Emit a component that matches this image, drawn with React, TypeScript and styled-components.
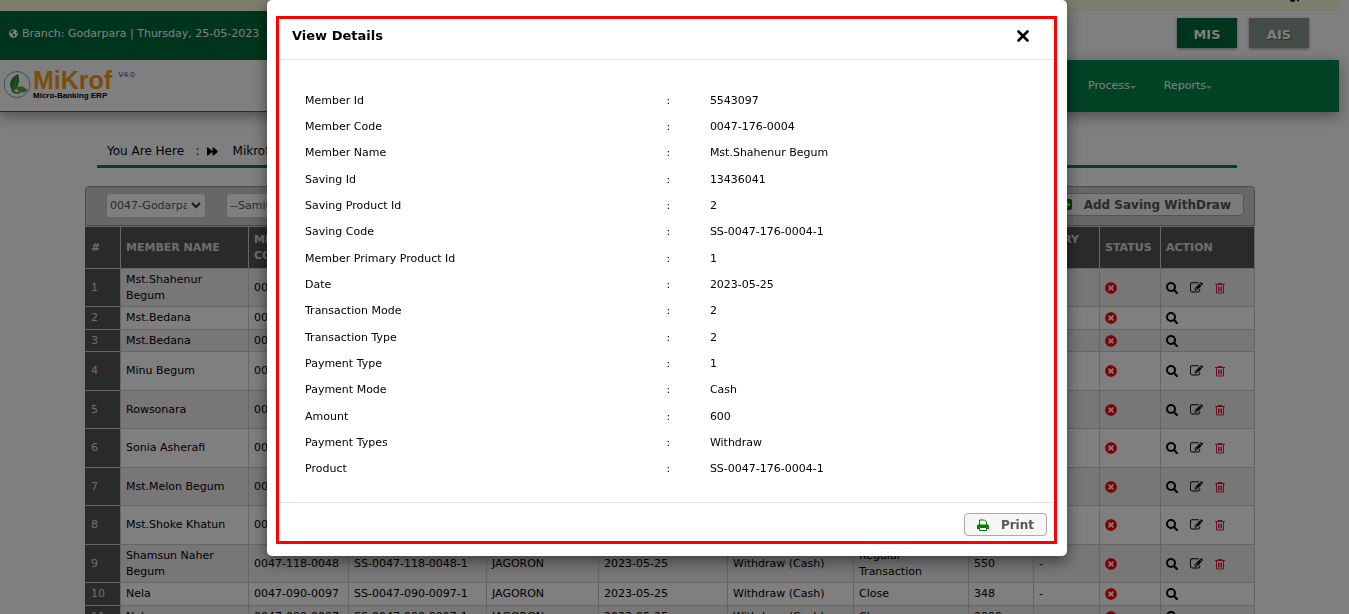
import React from "react";
import styled, { createGlobalStyle } from "styled-components";
import { FaGlobeAmericas, FaForward, FaTimesCircle } from "react-icons/fa";

const Global = createGlobalStyle`
  *, *::before, *::after { box-sizing: border-box; }
  html, body { margin: 0; height: 100%; }
  body {
    overflow: hidden;
    background: #fff;
    color: #000;
    font-family: Verdana, "DejaVu Sans", sans-serif;
    font-size: 11px;
    line-height: 16px;
  }
  button, select { font-family: inherit; }
`;

const Page = styled.div`
  height: 100vh;
  overflow: hidden;
  padding-right: 10px;
`;

const Notice = styled.div`
  height: 11px;
  background: #fafadc;
  display: flex;
  justify-content: flex-end;
  padding-right: 39px;

  svg { display: block; }
`;

const BranchBar = styled.div`
  height: 49px;
  display: flex;
  justify-content: space-between;
`;

const Branch = styled.div`
  width: 50%;
  background: #006b3b;
  color: #fff;
  display: flex;
  align-items: center;
  gap: 4px;
  padding: 0 0 4px 9px;
`;

const Modules = styled.div`
  display: flex;
  gap: 12px;
  padding: 7px 30px 0 0;
`;

const ModuleButton = styled.button<{ $active?: boolean }>`
  width: 60px;
  height: 30px;
  border: 0;
  padding: 3px 0 0;
  background: ${(p) => (p.$active ? "#006b3b" : "#86988f")};
  color: #fff;
  font-size: 13px;
  font-weight: bold;
  text-shadow: 1px 1px 1px rgba(0, 0, 0, 0.4);
  box-shadow: 0 1px 3px rgba(0, 0, 0, 0.4);
`;

const NavBar = styled.header`
  height: 52px;
  display: flex;
  box-shadow: 0 4px 14px rgba(0, 0, 0, 0.4);
`;

const Brand = styled.a`
  width: 50%;
  display: flex;
  align-items: flex-start;
  padding: 9px 0 0 3px;
  border-bottom: 1px solid #008449;
  text-decoration: none;
  font-family: "Liberation Sans", Arial, sans-serif;
`;

const BrandMark = styled.svg`
  width: 28px;
  height: 28px;
  margin-top: 1px;
`;

const BrandText = styled.span`
  display: flex;
  flex-direction: column;
  padding-left: 2px;
`;

const BrandName = styled.span`
  color: #f59a1b;
  font-size: 25px;
  font-weight: bold;
  line-height: 23px;
`;

const BrandTag = styled.span`
  color: #000;
  font-size: 8px;
  font-weight: bold;
  line-height: 8px;
`;

const Version = styled.span`
  color: #2b3a9a;
  font-size: 8px;
  line-height: 12px;
  padding-left: 6px;
`;

const Menu = styled.nav`
  width: 50%;
  background: #008449;
  display: flex;
  justify-content: flex-end;
  align-items: center;
  gap: 28px;
  padding-right: 127px;
`;

const MenuLink = styled.a`
  display: flex;
  align-items: center;
  color: #fff;
  text-decoration: none;

  &::after {
    content: "";
    border: 3px solid transparent;
    border-top-color: #a5c5dd;
    border-bottom: 0;
    margin-top: 2px;
  }
`;

const Crumbs = styled.div`
  margin: 27px 102px 0 97px;
  height: 29px;
  border-bottom: 3px solid #008449;
  display: flex;
  padding: 4px 0 0 10px;
  font-size: 12px;

  svg { margin: 3px 15px 0 7px; }
`;

const Panel = styled.main`
  margin: 18px 84px 0 85px;
`;

const Toolbar = styled.div`
  height: 40px;
  border: 1px solid #999;
  border-radius: 4px 4px 0 0;
  background: #cecece;
  display: flex;
  align-items: flex-start;
  padding: 6px 10px 0 20px;
`;

const Filter = styled.select`
  appearance: none;
  width: 100px;
  height: 25px;
  margin-right: 20px;
  padding: 0 18px 0 3px;
  border: 1px solid #c8c8c8;
  border-radius: 3px;
  color: #555;
  font-size: 11px;
  background: #fff url("data:image/svg+xml,%3Csvg xmlns='http://www.w3.org/2000/svg' width='10' height='7'%3E%3Cpath d='M1 1l4 4 4-4' fill='none' stroke='%23333' stroke-width='2'/%3E%3C/svg%3E") no-repeat right 4px center;
`;

const ActionButton = styled.button<{ $right?: boolean }>`
  height: 23px;
  margin-left: ${(p) => (p.$right ? "auto" : "0")};
  display: flex;
  align-items: center;
  gap: 12px;
  padding: 0 12px;
  border: 1px solid #aaa;
  border-radius: 4px;
  background: #f6f6f6;
  color: #555;
  font-size: 12px;
  font-weight: bold;
`;

const Grid = styled.table`
  width: 100%;
  table-layout: fixed;
  border-collapse: collapse;

  th, td {
    border: 1px solid #ccc;
    padding: 2px 5px;
    text-align: left;
    white-space: pre-line;
  }
  thead th {
    height: 42px;
    padding: 0 5px;
    background: #555;
    color: #ddd;
  }
  tbody th {
    background: #555;
    color: #ddd;
    font-weight: normal;
  }
  tbody tr:nth-child(odd) { background: #eee; }
  tr > :first-child { border-left-color: #555; }
`;

const Row = styled.tr<{ $tall?: boolean }>`
  height: ${(p) => (p.$tall ? "38px" : "22px")};

  &:nth-child(even) { height: ${(p) => (p.$tall ? "39px" : "23px")}; }
`;

const StatusCell = styled.td`
  svg { display: block; color: #f00; }
`;

const Tools = styled.div`
  display: flex;
  align-items: center;
  gap: 12px;
`;

const ToolButton = styled.button`
  display: flex;
  padding: 0;
  border: 0;
  background: none;
  color: #000;
`;

const Backdrop = styled.div`
  position: fixed;
  inset: 0;
  padding-right: 15px;
  background: rgba(0, 0, 0, 0.5);
  display: flex;
  justify-content: center;
  align-items: flex-start;
`;

const Dialog = styled.section`
  width: 800px;
  max-width: 100%;
  padding: 16px 10px 12px 9px;
  border-radius: 5px;
  background: #fff;
  box-shadow: 0 5px 15px rgba(0, 0, 0, 0.5);
`;

const Frame = styled.div`
  border: 3px solid #f00;
`;

const DialogHead = styled.div`
  height: 41px;
  display: flex;
  align-items: center;
  justify-content: space-between;
  padding: 0 25px 7px 13px;
  border-bottom: 1px solid #e5e5e5;
`;

const Title = styled.h2`
  margin: 0;
  padding-top: 1px;
  font-size: 13px;
  line-height: 16px;
`;

const CloseButton = styled.button`
  display: flex;
  padding: 0;
  border: 0;
  background: none;
  color: #000;
`;

const Details = styled.table`
  width: calc(100% - 52px);
  margin: 27px 26px 20px;
  table-layout: fixed;
  border-collapse: collapse;

  th, td {
    padding: 0;
    font-weight: normal;
    text-align: left;
    vertical-align: middle;
  }
`;

const DetailRow = styled.tr<{ $tall?: boolean }>`
  height: ${(p) => (p.$tall ? "27px" : "26px")};
`;

const DialogFoot = styled.div`
  height: 39px;
  display: flex;
  justify-content: flex-end;
  align-items: flex-start;
  padding: 10px 7px 0;
  border-top: 1px solid #e0e0e5;
`;

const Leaf = () => (
  <BrandMark viewBox="0 0 28 28" aria-hidden="true">
    <circle cx="14" cy="14.500" r="13" fill="none" stroke="#6aa6c8" />
    <path d="M15 4C9 7 6 12 7.500 17c.500 2 1.500 3.500 3 4.500C15.500 17 17.500 11 15 4z" fill="#2f8a34" />
    <path d="M13.500 9c-1 4-2 8-3 12" fill="none" stroke="#8cc98a" strokeWidth=".7" />
    <path d="M13 18c4-3 9-1 11.500 2.500-4 3.500-9 2.500-11.500-2.500z" fill="#55a845" />
    <path d="M9 20c1.500 2.500 4.500 3.500 8 2.500" fill="none" stroke="#2f8a34" strokeWidth="1.500" />
  </BrandMark>
);

const NoticeMarks = () => (
  <svg width="10" height="2" viewBox="0 0 10 2" aria-hidden="true">
    <path d="M0 0h5v1l-1 1H2L0 1zM7 0h2v1.500H7.500z" fill="#111" />
  </svg>
);

const Magnifier = () => (
  <svg width="12" height="12" viewBox="0 0 12 12" aria-hidden="true">
    <circle cx="5" cy="5" r="4" fill="none" stroke="currentColor" strokeWidth="2" />
    <path d="M8 8l3 3" stroke="currentColor" strokeWidth="2.200" strokeLinecap="round" />
  </svg>
);

const PencilSquare = () => (
  <svg width="13" height="12" viewBox="0 0 1792 1600" aria-hidden="true">
    <path
      fill="currentColor"
      d="M888 1056l116-116-152-152-116 116v56h96v96h56zm440-720q-16-16-33 1L945 687q-17 17-1 33t33-1l350-350q17-17 1-33zm80 594v190q0 119-84.500 203.500T1120 1408H288q-119 0-203.500-84.500T0 1120V288Q0 169 84.500 84.500T288 0h832q63 0 117 25 15 7 18 23 3 17-9 29l-49 49q-14 14-32 8-23-6-45-6H288q-66 0-113 47t-47 113v832q0 66 47 113t113 47h832q66 0 113-47t47-113V994q0-13 9-22l64-64q15-15 35-7t20 29zm-96-738l288 288-672 672H640V864zm444 132l-92 92-288-288 92-92q28-28 68-28t68 28l152 152q28 28 28 68t-28 68z"
    />
  </svg>
);

const Bin = () => (
  <svg width="10" height="12" viewBox="0 0 10 12" fill="none" stroke="#e0183c" aria-hidden="true">
    <path d="M0 2.500h10M3 2.500v-1h4v1M1.500 3v8h7V3M3.500 4.500v5M5 4.500v5M6.500 4.500v5" />
  </svg>
);

const Printer = () => (
  <svg width="12" height="12" viewBox="0 0 12 12" aria-hidden="true">
    <path d="M2.500 6V1h5l2 2v3" fill="none" stroke="#008000" />
    <path d="M1.500 5.500h9Q12 5.500 12 7v3h-2V8H2v2H0V7q0-1.500 1.500-1.500z" fill="#008000" />
    <path d="M2.500 8.500h7v3h-7z" fill="#fff" stroke="#008000" />
  </svg>
);

const PlusSquare = () => (
  <svg width="11" height="11" viewBox="0 0 11 11" aria-hidden="true">
    <rect width="11" height="11" rx="2" fill="#008000" />
    <path d="M5.500 2v7M2 5.500h7" stroke="#fff" strokeWidth="2" />
  </svg>
);

const Cross = () => (
  <svg width="12" height="12" viewBox="0 0 12 12" aria-hidden="true">
    <path d="M1.500 1.500l9 9M10.500 1.500l-9 9" stroke="#000" strokeWidth="2.600" strokeLinecap="round" />
  </svg>
);

type Member = {
  name: string;
  code: string;
  saving?: string;
  samity?: string;
  date?: string;
  mode?: string;
  type?: string;
  amount?: string;
  entry?: string;
  tall?: boolean;
  locked?: boolean;
};

const jagoron = { samity: "JAGORON", date: "2023-05-25", mode: "Withdraw (Cash)", entry: "-" };

const members: Member[] = [
  { name: "Mst.Shahenur\nBegum", code: "0047", tall: true },
  { name: "Mst.Bedana", code: "0047", locked: true },
  { name: "Mst.Bedana", code: "0047", locked: true },
  { name: "Minu Begum", code: "0047", tall: true },
  { name: "Rowsonara", code: "0047", tall: true },
  { name: "Sonia Asherafi", code: "0047", tall: true },
  { name: "Mst.Melon Begum", code: "0047", tall: true },
  { name: "Mst.Shoke Khatun", code: "0047", tall: true },
  { name: "Shamsun Naher\nBegum", code: "0047-118-0048", saving: "SS-0047-118-0048-1", ...jagoron, type: "Regular\nTransaction", amount: "550", tall: true },
  { name: "Nela", code: "0047-090-0097", saving: "SS-0047-090-0097-1", ...jagoron, type: "Close", amount: "348", locked: true },
  { name: "Nela", code: "0047-090-0097", saving: "SS-0047-090-0097-1", ...jagoron, type: "Close", amount: "2009", locked: true },
];

const columns: [string, number][] = [
  ["#", 35],
  ["MEMBER NAME", 128],
  ["MEMBER\nCODE", 100],
  ["", 138],
  ["", 112],
  ["", 129],
  ["", 126],
  ["", 115],
  ["", 65],
  ["ENTRY\n\u00a0", 66],
  ["STATUS", 61],
  ["ACTION", 94],
];
const columnTotal = columns.reduce((sum, [, width]) => sum + width, 0);

const details: [string, string][] = [
  ["Member Id", "5543097"],
  ["Member Code", "0047-176-0004"],
  ["Member Name", "Mst.Shahenur Begum"],
  ["Saving Id", "13436041"],
  ["Saving Product Id", "2"],
  ["Saving Code", "SS-0047-176-0004-1"],
  ["Member Primary Product Id", "1"],
  ["Date", "2023-05-25"],
  ["Transaction Mode", "2"],
  ["Transaction Type", "2"],
  ["Payment Type", "1"],
  ["Payment Mode", "Cash"],
  ["Amount", "600"],
  ["Payment Types", "Withdraw"],
  ["Product", "SS-0047-176-0004-1"],
];

export default function App() {
  return (
    <>
      <Global />
      <Page>
        <Notice><NoticeMarks /></Notice>
        <BranchBar>
          <Branch>
            <FaGlobeAmericas size={9} />
            Branch: Godarpara | Thursday, 25-05-2023
          </Branch>
          <Modules>
            <ModuleButton $active>MIS</ModuleButton>
            <ModuleButton>AIS</ModuleButton>
          </Modules>
        </BranchBar>
        <NavBar>
          <Brand href="#">
            <Leaf />
            <BrandText>
              <BrandName>MiKrof</BrandName>
              <BrandTag>Micro-Banking ERP</BrandTag>
            </BrandText>
            <Version>V4.0</Version>
          </Brand>
          <Menu>
            <MenuLink href="#">Process</MenuLink>
            <MenuLink href="#">Reports</MenuLink>
          </Menu>
        </NavBar>
        <Crumbs>
          You Are Here &nbsp; : <FaForward size={11} /> Mikrof
        </Crumbs>
        <Panel>
          <Toolbar>
            <Filter aria-label="Branch"><option>0047-Godarpara</option></Filter>
            <Filter aria-label="Samity"><option>--Samity--</option></Filter>
            <ActionButton $right><PlusSquare />Add Saving WithDraw</ActionButton>
          </Toolbar>
          <Grid>
            <colgroup>
              {columns.map(([, width], i) => (
                <col key={i} style={{ width: `${(width / columnTotal) * 100}%` }} />
              ))}
            </colgroup>
            <thead>
              <tr>{columns.map(([label], i) => <th key={i} scope="col">{label}</th>)}</tr>
            </thead>
            <tbody>
              {members.map((m, i) => (
                <Row key={i} $tall={m.tall}>
                  <th scope="row">{i + 1}</th>
                  <td>{m.name}</td>
                  <td>{m.code}</td>
                  <td>{m.saving}</td>
                  <td>{m.samity}</td>
                  <td>{m.date}</td>
                  <td>{m.mode}</td>
                  <td>{m.type}</td>
                  <td>{m.amount}</td>
                  <td>{m.entry}</td>
                  <StatusCell><FaTimesCircle size={12} /></StatusCell>
                  <td>
                    <Tools>
                      <ToolButton aria-label="View"><Magnifier /></ToolButton>
                      {!m.locked && <ToolButton aria-label="Edit"><PencilSquare /></ToolButton>}
                      {!m.locked && <ToolButton aria-label="Delete"><Bin /></ToolButton>}
                    </Tools>
                  </td>
                </Row>
              ))}
            </tbody>
          </Grid>
        </Panel>
      </Page>
      <Backdrop>
        <Dialog role="dialog" aria-label="View Details">
          <Frame>
            <DialogHead>
              <Title>View Details</Title>
              <CloseButton aria-label="Close"><Cross /></CloseButton>
            </DialogHead>
            <Details>
              <colgroup>
                <col style={{ width: "50%" }} />
                <col style={{ width: "6%" }} />
                <col />
              </colgroup>
              <tbody>
                {details.map(([label, value], i) => (
                  <DetailRow key={label} $tall={i % 3 === 0}>
                    <th scope="row">{label}</th>
                    <td>:</td>
                    <td>{value}</td>
                  </DetailRow>
                ))}
              </tbody>
            </Details>
            <DialogFoot>
              <ActionButton><Printer />Print</ActionButton>
            </DialogFoot>
          </Frame>
        </Dialog>
      </Backdrop>
    </>
  );
}
